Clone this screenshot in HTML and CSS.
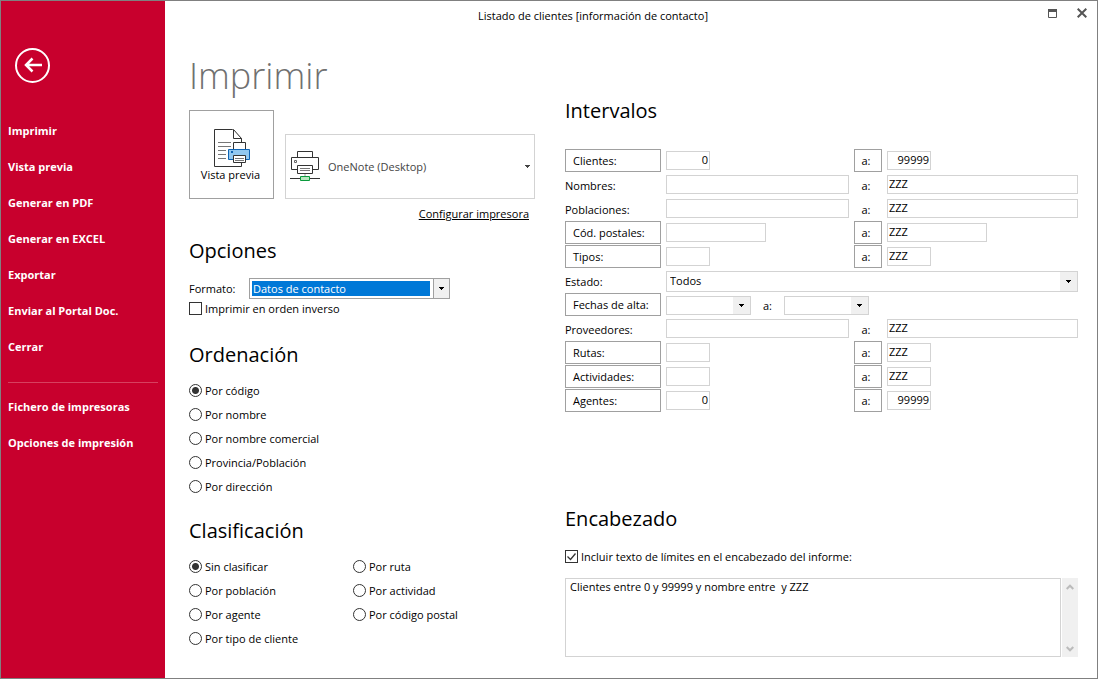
FILE: index.html
```html
<!DOCTYPE html>
<html lang="es">
<head>
<meta charset="utf-8">
<title>Listado de clientes [información de contacto]</title>
<link rel="stylesheet" href="styles.css">
</head>
<body>
<div class="window">
  <aside class="sidebar">
    <button class="back" type="button" aria-label="Volver">
      <svg width="35" height="35" viewBox="0 0 35 35" fill="none" stroke="#fff">
        <circle cx="17.5" cy="17.5" r="16.5" stroke-width="2"/>
        <path d="M10.500 17H27M17.500 10.500L11 17l6.500 6.500" stroke-width="2.500"/>
      </svg>
    </button>
    <nav class="menu">
      <a href="#imprimir">Imprimir</a>
      <a href="#vista">Vista previa</a>
      <a href="#pdf">Generar en PDF</a>
      <a href="#excel">Generar en EXCEL</a>
      <a href="#exportar">Exportar</a>
      <a href="#portal">Enviar al Portal Doc.</a>
      <a href="#cerrar">Cerrar</a>
      <hr>
      <a href="#fichero">Fichero de impresoras</a>
      <a href="#opciones">Opciones de impresión</a>
    </nav>
  </aside>

  <div class="main">
    <header class="titlebar">
      <div class="title">Listado de clientes [información de contacto]</div>
      <div class="winbuttons">
        <button type="button" aria-label="Maximizar">
          <svg width="9" height="9" viewBox="0 0 9 9"><path d="M.5.5h8v8h-8z" fill="none" stroke="#555"/><path d="M0 0h9v3H0z" fill="#555"/></svg>
        </button>
        <button type="button" aria-label="Cerrar">
          <svg width="10" height="10" viewBox="0 0 10 10"><path d="M.7.7l8.600 8.600M9.300.7L.7 9.300" fill="none" stroke="#555" stroke-width="2"/></svg>
        </button>
      </div>
    </header>

    <div class="columns">
      <div class="left">
        <h1>Imprimir</h1>
        <div class="print">
          <button class="preview" type="button">
            <svg width="41" height="38" viewBox="-3 1 41 38" fill="none" stroke="#333">
              <path d="M1.500 1.500h18l9 9v28h-27z" fill="#fff"/>
              <path d="M20.500 1.500v9h8z" fill="#fff"/>
              <path d="M5 14.500h13M5 18.500h13M5 22.500h8M5 26.500h8M5 30.500h8" stroke="#777"/>
              <path d="M20.500 14.500h12v8h-12z" fill="#fff"/>
              <path d="M15.500 21.500h21v10h-21z" fill="#92c8f0" stroke="#0f64b4"/>
              <path d="M18 23h2v2h-2z" fill="#0f64b4" stroke="none"/>
              <path d="M20.500 27.500h12v7h-12z" fill="#fff"/>
              <path d="M22 30.500h9M22 32.500h9" stroke="#777"/>
            </svg>
            <span>Vista previa</span>
          </button>
          <button class="printer" type="button">
            <svg width="30" height="31" viewBox="0 0 30 31" fill="none" stroke="#333">
              <path d="M7.500 7V.5h15V7M7 18.500H1.500v-12h27v12H23"/>
              <path d="M7.500 14.500h15v8h-15z" fill="#fff"/>
              <path d="M10 17.500h10M10 19.500h10" stroke="#777"/>
              <path d="M4.500 9.500h2v2h-2z" stroke="#666"/>
              <path d="M0 27.500h30"/><path d="M15 23v3" stroke="#999"/>
              <path d="M10.500 25.500h9v4h-9z" fill="#b5e6bd" stroke="#0a9a3c"/>
            </svg>
            <span>OneNote (Desktop)</span>
            <svg class="caret" width="5" height="3" viewBox="0 0 5 3"><path d="M0 0h5v1H4v1H3v1H2V2H1V1H0z" fill="#444"/></svg>
          </button>
        </div>
        <a class="configure" href="#configurar">Configurar impresora</a>

        <section class="opciones">
          <h2>Opciones</h2>
          <div class="format">
            <label for="formato">Formato:</label>
            <select id="formato"><option>Datos de contacto</option></select>
          </div>
          <label class="choice short"><input type="checkbox">Imprimir en orden inverso</label>
        </section>

        <section class="ordenacion">
          <h2>Ordenación</h2>
          <div class="choices">
            <label class="choice"><input type="radio" name="orden" checked>Por código</label>
            <label class="choice"><input type="radio" name="orden">Por nombre</label>
            <label class="choice"><input type="radio" name="orden">Por nombre comercial</label>
            <label class="choice"><input type="radio" name="orden">Provincia/Población</label>
            <label class="choice"><input type="radio" name="orden">Por dirección</label>
          </div>
        </section>

        <section class="clasificacion">
          <h2>Clasificación</h2>
          <div class="choices double">
            <label class="choice"><input type="radio" name="clase" checked>Sin clasificar</label>
            <label class="choice"><input type="radio" name="clase">Por ruta</label>
            <label class="choice"><input type="radio" name="clase">Por población</label>
            <label class="choice"><input type="radio" name="clase">Por actividad</label>
            <label class="choice"><input type="radio" name="clase">Por agente</label>
            <label class="choice"><input type="radio" name="clase">Por código postal</label>
            <label class="choice"><input type="radio" name="clase">Por tipo de cliente</label>
          </div>
        </section>
      </div>

      <div class="right">
        <section class="intervalos">
          <h2>Intervalos</h2>
          <div class="ranges">
            <button type="button" class="pick">Clientes:</button>
            <input class="small num" value="0" aria-label="Clientes desde">
            <button type="button" class="to">a:</button>
            <input class="small num" value="99999" aria-label="Clientes hasta">

            <label for="nom1">Nombres:</label>
            <input id="nom1">
            <label class="tolabel" for="nom2">a:</label>
            <input id="nom2" value="ZZZ">

            <label for="pob1">Poblaciones:</label>
            <input id="pob1">
            <label class="tolabel" for="pob2">a:</label>
            <input id="pob2" value="ZZZ">

            <button type="button" class="pick">Cód. postales:</button>
            <input class="medium" aria-label="Código postal desde">
            <button type="button" class="to">a:</button>
            <input class="medium" value="ZZZ" aria-label="Código postal hasta">

            <button type="button" class="pick">Tipos:</button>
            <input class="small" aria-label="Tipo desde">
            <button type="button" class="to">a:</button>
            <input class="small" value="ZZZ" aria-label="Tipo hasta">

            <label for="estado">Estado:</label>
            <select id="estado" class="wide"><option>Todos</option></select>

            <button type="button" class="pick">Fechas de alta:</button>
            <div class="dates wide">
              <select aria-label="Fecha desde"><option></option></select>
              <label class="tolabel" for="fecha2">a:</label>
              <select id="fecha2"><option></option></select>
            </div>

            <label for="prov1">Proveedores:</label>
            <input id="prov1">
            <label class="tolabel" for="prov2">a:</label>
            <input id="prov2" value="ZZZ">

            <button type="button" class="pick">Rutas:</button>
            <input class="small" aria-label="Ruta desde">
            <button type="button" class="to">a:</button>
            <input class="small" value="ZZZ" aria-label="Ruta hasta">

            <button type="button" class="pick">Actividades:</button>
            <input class="small" aria-label="Actividad desde">
            <button type="button" class="to">a:</button>
            <input class="small" value="ZZZ" aria-label="Actividad hasta">

            <button type="button" class="pick">Agentes:</button>
            <input class="small num" value="0" aria-label="Agente desde">
            <button type="button" class="to">a:</button>
            <input class="small num" value="99999" aria-label="Agente hasta">
          </div>
        </section>

        <section class="encabezado">
          <h2>Encabezado</h2>
          <label class="choice short"><input type="checkbox" checked>Incluir texto de límites en el encabezado del informe:</label>
          <div class="memo">
            <textarea aria-label="Texto de límites">Clientes entre 0 y 99999 y nombre entre  y ZZZ</textarea>
            <div class="scroll">
              <button type="button" aria-label="Subir"><svg width="8" height="6" viewBox="0 0 8 6"><path d="M.7 5L4 1.700 7.300 5" fill="none" stroke="#bbb" stroke-width="2"/></svg></button>
              <button type="button" aria-label="Bajar"><svg width="8" height="6" viewBox="0 0 8 6"><path d="M.7 1L4 4.300 7.300 1" fill="none" stroke="#bbb" stroke-width="2"/></svg></button>
            </div>
          </div>
        </section>
      </div>
    </div>
  </div>
</div>
</body>
</html>
```
FILE: styles.css
```css
* { box-sizing: border-box; }
body {
  margin: 0;
  background: #fff;
  color: #000;
  font: 11px/16px "Open Sans", "Noto Sans", sans-serif;
}
button, input, select, textarea { font: inherit; color: inherit; margin: 0; border-radius: 0; }
button { padding: 0; background: none; border: 0; }
svg { display: block; flex: none; }

.window { display: flex; min-height: 100vh; border: 1px solid #808080; }

.sidebar { flex: none; width: 164px; padding: 47px 7px 0; background: #c8002d; color: #fff; }
.back { display: block; margin-left: 7px; }
.menu { display: flex; flex-direction: column; margin-top: 30px; font-weight: 700; }
.menu a { height: 36px; line-height: 36px; color: #fff; text-decoration: none; white-space: nowrap; }
.menu hr { width: 100%; height: 1px; margin: 17px 0 6px; border: 0; background: #d7405f; }

.main { flex: 1; min-width: 0; }
.titlebar { display: flex; align-items: center; height: 30px; }
.title { flex: 1; text-align: center; }
.winbuttons { display: flex; gap: 20px; width: 76px; padding: 0 10px 6px 0; justify-content: flex-end; align-items: center; }

.columns { display: grid; grid-template-columns: 346px 1fr; gap: 30px; padding: 0 19px 21px 24px; }
h1, h2 { margin: 0; font-weight: 400; }
h1 { margin-top: 21px; font-size: 36px; line-height: 48px; font-weight: 300; color: #707070; }
h2 { font-size: 20px; line-height: 32px; }

.left { display: flex; flex-direction: column; }
.print { display: flex; align-items: flex-end; gap: 11px; margin-top: 10px; }
.preview {
  display: flex; flex-direction: column; align-items: center; justify-content: center;
  width: 85px; height: 89px; padding-top: 3px; padding-right: 2px; border: 1px solid #a0a0a0;
}
.printer {
  display: flex; align-items: center; gap: 8px; flex: 1; height: 65px; padding: 0 4px;
  border: 1px solid #d3d3d3; color: #444;
}
.printer .caret { margin-left: auto; }
.configure { align-self: flex-end; margin: 7px 6px 0 0; color: #000; }

.opciones { margin-top: 13px; }
.ordenacion { margin-top: 20px; }
.clasificacion { margin-top: 16px; }
.format { display: flex; align-items: center; margin-top: 11px; }
.format label { width: 60px; }
.choices { display: grid; margin-top: 8px; }
.double { grid-template-columns: 164px 1fr; }
.choice { display: flex; align-items: center; gap: 3px; height: 24px; }
.short { height: 20px; }

.choice input { appearance: none; flex: none; width: 13px; height: 13px; margin-bottom: 1px; border: 1px solid #333; background: #fff; }
.choice input[type="radio"] { border-radius: 50%; }
.choice input[type="radio"]:checked { background: radial-gradient(circle, #333 3px, #fff 4px); }
.choice input[type="checkbox"]:checked {
  background: #fff url("data:image/svg+xml,%3Csvg xmlns='http://www.w3.org/2000/svg' width='11' height='11'%3E%3Cpath d='M1.500 5.500l3 3 5-6' fill='none' stroke='%23333' stroke-width='1.300'/%3E%3C/svg%3E") center no-repeat;
}

select {
  appearance: none;
  border: 1px solid #d3d3d3;
  padding: 0 18px 0 3px;
  background:
    url("data:image/svg+xml,%3Csvg xmlns='http://www.w3.org/2000/svg' width='5' height='3'%3E%3Cpath d='M0 0h5v1H4v1H3v1H2V2H1V1H0z'/%3E%3C/svg%3E") right 6px center no-repeat,
    linear-gradient(#f0f0f0, #f0f0f0) right / 17px 100% no-repeat,
    #fff;
}
#formato {
  width: 201px; height: 21px;
  border-color: #a0a0a0;
  color: #fff;
  background:
    url("data:image/svg+xml,%3Csvg xmlns='http://www.w3.org/2000/svg' width='5' height='3'%3E%3Cpath d='M0 0h5v1H4v1H3v1H2V2H1V1H0z'/%3E%3C/svg%3E") right 5px center no-repeat,
    linear-gradient(#f0f0f0, #f0f0f0) right / 15px 100% no-repeat,
    linear-gradient(#a0a0a0, #a0a0a0) right / 16px 100% no-repeat,
    linear-gradient(#0078d7, #0078d7) 2px center / 178px 15px no-repeat,
    #fff;
}

.intervalos h2 { margin-top: 64px; }
.ranges {
  display: grid;
  grid-template-columns: 96px 183fr 28px 191fr;
  grid-auto-rows: 24px;
  column-gap: 5px;
  align-items: center;
  margin-top: 22px;
}
.ranges input { width: 100%; min-width: 0; height: 19px; margin-bottom: 1px; padding: 0 1px 2px; border: 1px solid #d3d3d3; background: #fff; }
.ranges label { padding-top: 1px; }
.ranges .small { width: 44px; }
.ranges .medium { width: 100px; }
.ranges .num { text-align: right; }
.pick, .to { height: 23px; margin-bottom: 1px; border: 1px solid #a0a0a0; }
.pick { padding-left: 7px; text-align: left; }
.to { padding-right: 4px; }
.ranges .tolabel { padding-right: 4px; text-align: center; }
.wide { grid-column: 2 / -1; }
#estado { height: 21px; }
.dates { display: flex; align-items: center; }
.dates select { width: 85px; height: 19px; }
.dates .tolabel { width: 33px; padding-right: 0; }

.encabezado { margin-top: 90px; }
.encabezado .choice { margin-top: 12px; }
.memo { display: flex; gap: 1px; margin-top: 11px; }
.memo textarea { flex: 1; min-width: 0; height: 79px; padding: 0 4px; border: 1px solid #d3d3d3; resize: none; overflow: hidden; }
.scroll { display: flex; flex-direction: column; justify-content: space-between; width: 16px; padding: 6px 4px 5px; background: #f0f0f0; }
```
